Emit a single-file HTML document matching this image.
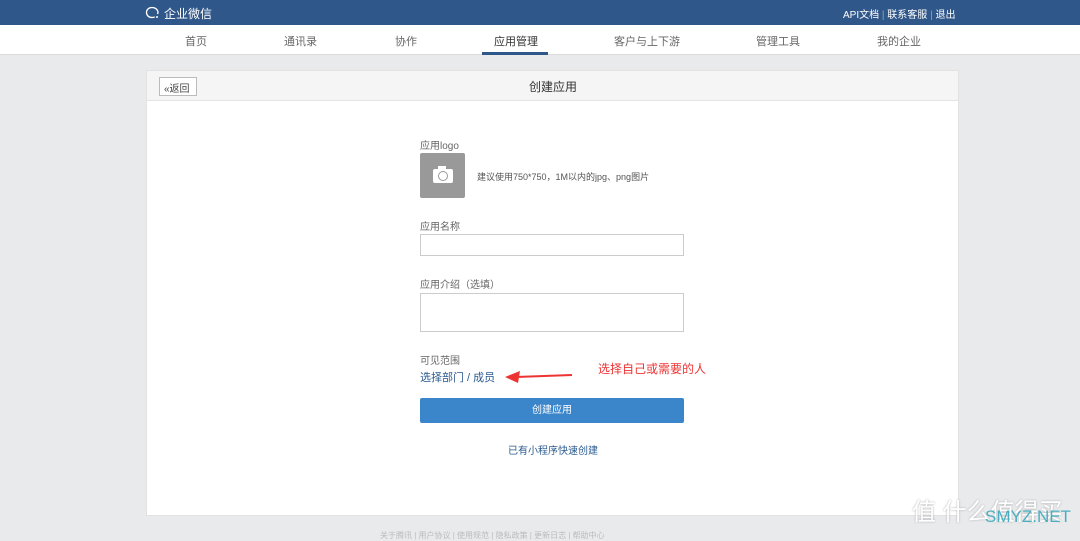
<!DOCTYPE html>
<html><head><meta charset="utf-8"><style>
*{margin:0;padding:0;box-sizing:border-box}
body{width:1080px;height:536px;overflow:hidden;background:#e9eaec;font-family:"Liberation Sans","Noto Sans CJK SC",sans-serif;font-size:12px;color:#555;position:relative}
.top{position:absolute;left:0;top:0;width:1080px;height:25px;background:#30578a;color:#fff}
.nav{position:absolute;left:0;top:25px;width:1080px;height:30px;background:#fff;border-bottom:1px solid #dcdcdc}
.nav span{position:absolute;top:8px;font-size:11px;color:#666}
.card{position:absolute;left:146px;top:70px;width:813px;height:446px;background:#fff;border:1px solid #e2e2e2}
.hd{height:30px;background:#f5f5f5;border-bottom:1px solid #e4e4e4;position:relative}
.abs{position:absolute}
.inp{position:absolute;left:420px;width:264px;border:1px solid #ccc;background:#fff}
.lbl{position:absolute;left:420px;font-size:10px;color:#666}
</style></head><body>
<div class="top">
<svg class="abs" style="left:145px;top:6px" width="16" height="14" viewBox="0 0 16 14"><path d="M7 1.5C3.5 1.5 1.5 3.8 1.5 6.5S3.5 11.5 7 11.5c1 0 2-.2 2.8-.6M12.5 8C12.8 7.5 13 7 13 6.5 13 3.8 10.5 1.5 7 1.5" fill="none" stroke="#fff" stroke-width="1.3"/><circle cx="12" cy="11" r="1" fill="#fff"/></svg>
<span class="abs" style="left:164px;top:5px;font-size:12px">企业微信</span>
<span class="abs" style="left:843px;top:6px;font-size:10px">API文档 <span style="color:#8aa">|</span> 联系客服 <span style="color:#8aa">|</span> 退出</span>
</div>
<div class="nav">
<span style="left:185px">首页</span><span style="left:284px">通讯录</span><span style="left:395px">协作</span><span style="left:494px;color:#333">应用管理</span><span style="left:614px">客户与上下游</span><span style="left:756px">管理工具</span><span style="left:877px">我的企业</span>
<div class="abs" style="left:482px;top:27px;width:66px;height:3px;background:#30578a"></div>
</div>
<div class="card">
<div class="hd">
<div class="abs" style="left:12px;top:6px;width:38px;height:19px;border:1px solid #bbb;background:#fff;font-size:10px;color:#444;padding:2px 0 0 4px">«返回</div>
<div class="abs" style="left:382px;top:7px;font-size:12px;color:#333">创建应用</div>
</div>
</div>
<div class="lbl" style="top:137px">应用logo</div>
<div class="abs" style="left:420px;top:153px;width:45px;height:45px;background:#999;border-radius:2px"><div class="abs" style="left:13px;top:16px;width:20px;height:14px;background:#fff;border-radius:2px"></div><div class="abs" style="left:18px;top:13px;width:8px;height:4px;background:#fff"></div><div class="abs" style="left:18px;top:18px;width:10px;height:10px;border:1.5px solid #999;border-radius:50%"></div></div>
<div class="abs" style="left:477px;top:170px;font-size:9px;color:#555">建议使用750*750，1M以内的jpg、png图片</div>
<div class="lbl" style="top:218px">应用名称</div>
<div class="inp" style="top:234px;height:22px"></div>
<div class="lbl" style="top:276px">应用介绍（选填）</div>
<div class="inp" style="top:293px;height:39px"></div>
<div class="lbl" style="top:352px">可见范围</div>
<div class="abs" style="left:420px;top:369px;font-size:11px;color:#2b5a8e">选择部门 / 成员</div>
<svg class="abs" style="left:502px;top:368px" width="72" height="18"><path d="M572 0" /><path d="M14 9 L70 7" stroke="#e33" stroke-width="2"/><path d="M3 9 L18 3 L16 15 Z" fill="#e33"/></svg>
<div class="abs" style="left:598px;top:360px;font-size:12px;color:#e33">选择自己或需要的人</div>
<div class="abs" style="left:420px;top:398px;width:264px;height:25px;background:#3b85cb;border-radius:2px;color:#fff;font-size:10px;text-align:center;line-height:25px">创建应用</div>
<div class="abs" style="left:508px;top:442px;font-size:10px;color:#2b5a8e">已有小程序快速创建</div>
<div class="abs" style="left:380px;top:530px;font-size:8px;color:#bbb">关于腾讯 | 用户协议 | 使用规范 | 隐私政策 | 更新日志 | 帮助中心</div>
<div class="abs" style="left:912px;top:492px;font-size:24px;color:#fff;text-shadow:0 0 2px #aaa">值 什么值得买</div>
<div class="abs" style="left:985px;top:507px;font-size:17px;color:#4aaec0">SMYZ.NET</div>
</body></html>
